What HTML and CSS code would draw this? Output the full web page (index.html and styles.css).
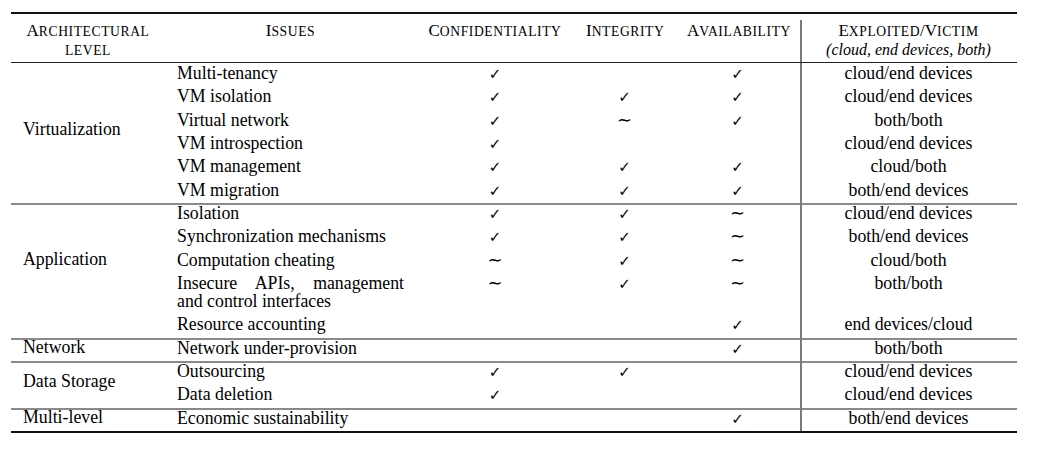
FILE: index.html
```html
<!DOCTYPE html>
<html>
<head>
<meta charset="utf-8">
<title>Security issues</title>
<link rel="stylesheet" href="styles.css">
</head>
<body>
<div class="page">
<table class="tbl">
<colgroup>
<col class="c-level"><col class="c-issue"><col class="c-conf"><col class="c-int"><col class="c-avail"><col class="c-exp">
</colgroup>
<thead>
<tr>
<th>A<span class="sc">rchitectural</span><br><span class="sc">level</span></th>
<th>I<span class="sc">ssues</span></th>
<th>C<span class="sc">onfidentiality</span></th>
<th>I<span class="sc">ntegrity</span></th>
<th>A<span class="sc">vailability</span></th>
<th class="ex">E<span class="sc">xploited</span>/V<span class="sc">ictim</span><br><span class="it">(cloud, end devices, both)</span></th>
</tr>
</thead>
<tbody>
<tr>
<td class="lvl" rowspan="6">Virtualization</td>
<td class="iss">Multi-tenancy</td><td><span class="ck">✓</span></td><td></td><td><span class="ck">✓</span></td><td class="ex">cloud/end devices</td>
</tr>
<tr><td class="iss">VM isolation</td><td><span class="ck">✓</span></td><td><span class="ck">✓</span></td><td><span class="ck">✓</span></td><td class="ex">cloud/end devices</td></tr>
<tr><td class="iss">Virtual network</td><td><span class="ck">✓</span></td><td><span class="tl">∼</span></td><td><span class="ck">✓</span></td><td class="ex">both/both</td></tr>
<tr><td class="iss">VM introspection</td><td><span class="ck">✓</span></td><td></td><td></td><td class="ex">cloud/end devices</td></tr>
<tr><td class="iss">VM management</td><td><span class="ck">✓</span></td><td><span class="ck">✓</span></td><td><span class="ck">✓</span></td><td class="ex">cloud/both</td></tr>
<tr><td class="iss">VM migration</td><td><span class="ck">✓</span></td><td><span class="ck">✓</span></td><td><span class="ck">✓</span></td><td class="ex">both/end devices</td></tr>

<tr class="g">
<td class="lvl lvl-app" rowspan="5">Application</td>
<td class="iss">Isolation</td><td><span class="ck">✓</span></td><td><span class="ck">✓</span></td><td><span class="tl">∼</span></td><td class="ex">cloud/end devices</td>
</tr>
<tr><td class="iss">Synchronization mechanisms</td><td><span class="ck">✓</span></td><td><span class="ck">✓</span></td><td><span class="tl">∼</span></td><td class="ex">both/end devices</td></tr>
<tr><td class="iss">Computation cheating</td><td><span class="tl">∼</span></td><td><span class="ck">✓</span></td><td><span class="tl">∼</span></td><td class="ex">cloud/both</td></tr>
<tr><td class="iss jst">Insecure APIs, management and control interfaces</td><td><span class="tl">∼</span></td><td><span class="ck">✓</span></td><td><span class="tl">∼</span></td><td class="ex">both/both</td></tr>
<tr><td class="iss">Resource accounting</td><td></td><td></td><td><span class="ck">✓</span></td><td class="ex">end devices/cloud</td></tr>

<tr class="g">
<td class="lvl lvl-one">Network</td>
<td class="iss">Network under-provision</td><td></td><td></td><td><span class="ck">✓</span></td><td class="ex">both/both</td>
</tr>

<tr class="g">
<td class="lvl" rowspan="2">Data Storage</td>
<td class="iss">Outsourcing</td><td><span class="ck">✓</span></td><td><span class="ck">✓</span></td><td></td><td class="ex">cloud/end devices</td>
</tr>
<tr><td class="iss">Data deletion</td><td><span class="ck">✓</span></td><td></td><td></td><td class="ex">cloud/end devices</td></tr>

<tr class="g">
<td class="lvl lvl-one">Multi-level</td>
<td class="iss">Economic sustainability</td><td></td><td></td><td><span class="ck">✓</span></td><td class="ex">both/end devices</td>
</tr>
</tbody>
</table>
</div>
</body>
</html>
```
FILE: styles.css
```css
html, body {
  margin: 0;
  background: #fff;
}

body {
  font-family: "Liberation Serif", "Times New Roman", serif;
  color: #000;
}

.page {
  padding: 12px 0 0 11px;
}

.tbl {
  width: 1006px;
  table-layout: fixed;
  border-collapse: separate;
  border-spacing: 0;
  border-top: 2px solid #111;
  border-bottom: 2px solid #111;
}

.c-level { width: 154px; }
.c-issue { width: 251px; }
.c-conf  { width: 158px; }
.c-int   { width: 101px; }
.c-avail { width: 125px; }
.c-exp   { width: 217px; }

.tbl th {
  font-weight: normal;
  font-size: 17px;
  line-height: 17.5px;
  padding: 8px 12px 3px;
  border-bottom: 1px solid #222;
  vertical-align: top;
  text-align: center;
  white-space: nowrap;
}

.sc {
  text-transform: uppercase;
  font-size: 0.8em;
  letter-spacing: 0.6px;
}

.it {
  font-style: italic;
  font-size: 16px;
}

.tbl th.ex {
  background: linear-gradient(#7a7a7a, #7a7a7a) no-repeat left 0 top 6px / 2px calc(100% - 6px);
}

.tbl td {
  font-size: 17.8px;
  line-height: 18px;
  height: 18px;
  padding: 1px 12px 4.35px;
  vertical-align: top;
  text-align: center;
}

.tbl td.iss {
  text-align: left;
}

.tbl td.jst {
  text-align: justify;
}

.tbl td.lvl {
  text-align: left;
  vertical-align: middle;
  padding: 0 12px 7.2px;
}

.tbl td.lvl-app {
  padding-bottom: 23px;
}

.tbl td.lvl-one {
  vertical-align: top;
  padding: 0 12px 5.35px;
}

.tbl td.ex {
  box-shadow: inset 2px 0 0 #7a7a7a;
}

.tbl tr.g td {
  box-shadow: inset 0 2px 0 #8a8a8a;
}

.tbl tr.g td.ex {
  box-shadow: inset 2px 0 0 #7a7a7a, inset 0 2px 0 #8a8a8a;
}

.ck {
  font-family: "DejaVu Sans", sans-serif;
  font-size: 15px;
  line-height: 0;
}

.tl {
  font-family: "DejaVu Sans", sans-serif;
  font-size: 18px;
  line-height: 0;
}
```
